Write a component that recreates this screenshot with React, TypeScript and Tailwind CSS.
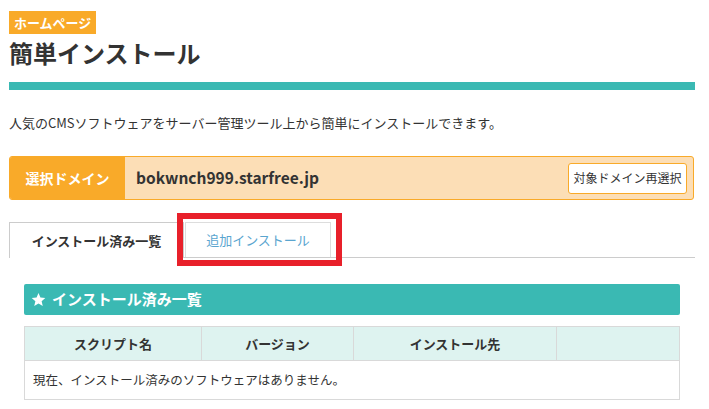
import React from "react";

const jp = { fontFamily: '"Noto Sans CJK JP", "Noto Sans", sans-serif' };

export default function App() {
  return (
    <div className="w-[709px] h-[409px] overflow-hidden bg-white text-[#333]" style={jp}>
      <div className="pl-[9px] pr-[14px] pt-[9px]">
        <div className="inline-flex h-[23px] items-center bg-[#f9aa29] px-[5px] text-[13px] font-bold leading-none text-white">
          ホームページ
        </div>
        <h1 className="mt-[4px] text-[24px] font-bold leading-[30px] text-[#333]">簡単インストール</h1>
        <div className="mt-[14px] h-[8px] bg-[#3ab9b3]" />
        <p className="mt-[23px] text-[13px] leading-[20px]">
          人気のCMSソフトウェアをサーバー管理ツール上から簡単にインストールできます。
        </p>
        <div className="mt-[23px] mr-[1px] flex h-[44px] rounded-[3px] border border-[#f9aa29] bg-[#fcdeb6]">
          <div className="flex w-[115px] items-center justify-center rounded-l-[2px] bg-[#f9aa29] text-[14px] font-bold text-white">
            選択ドメイン
          </div>
          <div className="flex flex-1 items-center pl-[11px] text-[15.5px] font-bold">bokwnch999.starfree.jp</div>
          <div className="flex items-center pr-[6px]">
            <button className="h-[31px] w-[119px] rounded-[3px] border border-[#f9aa29] bg-white text-[12px] text-[#333]">
              対象ドメイン再選択
            </button>
          </div>
        </div>
        <div className="relative mt-[22px] flex h-[36px] border-b border-[#ccc]">
          <div className="-mb-px flex w-[175px] items-center justify-center border border-b-0 border-[#ccc] bg-white text-[13px] font-bold">
            インストール済み一覧
          </div>
          <div className="ml-[1px] flex w-[146px] items-center justify-center border border-b-0 border-[#ddd] bg-white text-[13px] text-[#5aa5cf]">
            追加インストール
          </div>
          <div className="pointer-events-none absolute left-[168px] top-[-9px] h-[53px] w-[165px] border-[6px] border-[#e8202a]" />
        </div>
        <div className="mx-[15px] mt-[26px]">
          <div className="flex h-[31px] items-center gap-[6px] rounded-[2px] bg-[#3ab9b3] pl-[7px] text-[15px] font-bold text-white">
            <svg width="15" height="15" viewBox="0 0 24 24" fill="white">
              <path d="M12 1.5l3.1 7.2 7.8.7-5.9 5.2 1.8 7.7L12 18.3l-6.8 4 1.8-7.7-5.9-5.2 7.8-.7z" />
            </svg>
            インストール済み一覧
          </div>
          <table className="mt-[11px] w-[656px] border-collapse text-[13px]">
            <thead>
              <tr className="h-[34px] bg-[#def3f0]">
                <th className="w-[177px] border border-[#d9d9d9] font-bold">スクリプト名</th>
                <th className="w-[152px] border border-[#d9d9d9] font-bold">バージョン</th>
                <th className="w-[203px] border border-[#d9d9d9] font-bold">インストール先</th>
                <th className="border border-[#d9d9d9]"></th>
              </tr>
            </thead>
            <tbody>
              <tr className="h-[39px]">
                <td colSpan={4} className="border border-[#d9d9d9] pl-[8px] text-[12.5px]">
                  現在、インストール済みのソフトウェアはありません。
                </td>
              </tr>
            </tbody>
          </table>
        </div>
      </div>
    </div>
  );
}
